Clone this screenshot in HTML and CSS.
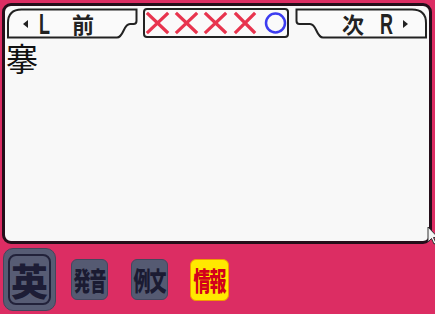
FILE: index.html
```html
<!DOCTYPE html>
<html lang="ja">
<head>
    <meta charset="UTF-8">
    <meta name="viewport" content="width=device-width, initial-scale=1.0">
    <title>辞書</title>
    <link rel="stylesheet" href="styles.css">
</head>
<body>
    <div class="screen">
        <div class="panel">
            <div class="tabs">
                <div class="tab tab-prev">
                    <svg class="tab-shape" viewBox="0 0 131 31" width="131" height="31">
                        <path d="M1,29.5 V15 Q1,1.5 14.5,1.5 H129.5 V13 Q129.5,16 126.5,16 H123 C116,16 117,29.5 110,29.5 Z" fill="#fafafa" stroke="#222" stroke-width="2"/>
                    </svg>
                    <svg class="arrow" viewBox="0 0 5 8" width="5" height="8"><path d="M5,0 V8 L0,4 Z" fill="#222"/></svg>
                    <span class="letter">L</span>
                    <span class="label">前</span>
                </div>
                <div class="marks">
                    <svg viewBox="0 0 142 26" width="142" height="26">
                        <g stroke="#e8344e" stroke-width="3.2" stroke-linecap="square">
                            <path d="M3,4 L22,22 M22,4 L3,22"/>
                            <path d="M32,4 L51,22 M51,4 L32,22"/>
                            <path d="M61,4 L80,22 M80,4 L61,22"/>
                            <path d="M91,4 L109,22 M109,4 L91,22"/>
                        </g>
                        <circle cx="130.5" cy="13" r="9.5" fill="none" stroke="#3c3cf0" stroke-width="2.5"/>
                    </svg>
                </div>
                <div class="tab tab-next">
                    <svg class="tab-shape" viewBox="0 0 132 31" width="132" height="31">
                        <g transform="scale(-1 1) translate(-132 0)">
                            <path d="M1,29.5 V15 Q1,1.5 15,1.5 H130.5 V13 Q130.5,16 127.5,16 H117 C110,16 111,29.5 104,29.5 Z" fill="#fafafa" stroke="#222" stroke-width="2"/>
                        </g>
                    </svg>
                    <span class="label">次</span>
                    <span class="letter">R</span>
                    <svg class="arrow" viewBox="0 0 5 8" width="5" height="8"><path d="M0,0 V8 L5,4 Z" fill="#222"/></svg>
                </div>
            </div>
            <div class="word">搴</div>
        </div>
        <div class="modes">
            <div class="mode-main"><div class="mode-inner">英</div></div>
            <div class="mode mode-sound"><span>発音</span></div>
            <div class="mode mode-example"><span>例文</span></div>
            <div class="mode mode-info active"><span>情報</span></div>
        </div>
        <svg class="cursor" viewBox="0 0 12 20" width="12" height="20">
            <path d="M1,1 V16 L4.5,12.5 L7,18 L9,17 L6.5,11.5 H11 Z" fill="#f4f4f4" stroke="#333" stroke-width="1"/>
        </svg>
    </div>
</body>
</html>
```

FILE: styles.css
```css
body {
    margin: 0;
    background-color: #dc2d63;
    font-family: "Noto Sans CJK JP", "Noto Sans", sans-serif;
    overflow: hidden;
}
.screen {
    position: relative;
    width: 435px;
    height: 314px;
    padding-top: 3px;
    box-sizing: border-box;
}
.panel {
    width: 430px;
    height: 241px;
    margin-left: 2px;
    box-sizing: border-box;
    border: 3px solid #240e1a;
    border-radius: 9px;
    background-color: #f8f8f8;
}
.tabs {
    display: flex;
    padding: 2px 2px 0;
}
.tab {
    position: relative;
    display: flex;
    align-items: center;
    height: 31px;
    color: #222;
}
.tab-shape {
    position: absolute;
    left: 0;
    top: 0;
}
.tab > span,
.tab > .arrow {
    position: relative;
}
.tab-prev {
    width: 131px;
    padding-left: 16px;
    box-sizing: border-box;
}
.tab-next {
    width: 132px;
    margin-left: 6px;
    padding-left: 47px;
    box-sizing: border-box;
}
.letter {
    display: inline-block;
    width: 13px;
    font-family: "Liberation Sans", Arial, sans-serif;
    font-weight: bold;
    font-size: 30px;
    line-height: 31px;
    transform: scaleX(0.6);
    transform-origin: left center;
}
.label {
    font-weight: bold;
    font-size: 22px;
    line-height: 31px;
}
.tab-prev .letter {
    margin-left: 11px;
}
.tab-prev .label {
    margin-left: 20px;
}
.tab-next .letter {
    margin-left: 16px;
}
.tab-next .arrow {
    margin-left: 10px;
}
.marks {
    display: flex;
    width: 146px;
    height: 30px;
    margin-left: 5px;
    box-sizing: border-box;
    border: 2px solid #222;
    border-radius: 4px;
    background-color: #fafafa;
}
.word {
    margin-top: 1px;
    padding-left: 1px;
    font-size: 32px;
    line-height: 34px;
    color: #111;
}
.modes {
    display: flex;
    align-items: center;
    height: 63px;
    margin-top: 4px;
    padding-left: 3px;
}
.mode-main {
    width: 53px;
    height: 63px;
    padding: 5px 4px;
    box-sizing: border-box;
    border: 1px solid #43465c;
    border-radius: 10px;
    background-color: #575c74;
}
.mode-inner {
    display: flex;
    align-items: center;
    justify-content: center;
    height: 100%;
    box-sizing: border-box;
    border: 2px solid #22223a;
    border-radius: 8px;
    font-weight: 900;
    font-size: 37px;
    color: #1d1d36;
}
.mode {
    display: flex;
    align-items: center;
    justify-content: center;
    width: 37px;
    height: 41px;
    box-sizing: border-box;
    border: 1px solid #44475e;
    border-radius: 6px;
    background-color: #555a72;
    color: #1b1b32;
    overflow: hidden;
}
.mode span {
    display: inline-block;
    font-weight: 900;
    font-size: 17px;
    line-height: 17px;
    letter-spacing: -1px;
    transform: scaleY(1.55);
}
.mode-sound {
    margin-left: 15px;
}
.mode-example {
    margin-left: 23px;
}
.mode-info {
    margin-left: 22px;
    width: 39px;
    height: 42px;
}
.mode.active {
    border: 1px solid #f29a00;
    background-color: #ffe900;
    color: #d3001c;
}
.cursor {
    position: absolute;
    left: 427px;
    top: 226px;
}
```
